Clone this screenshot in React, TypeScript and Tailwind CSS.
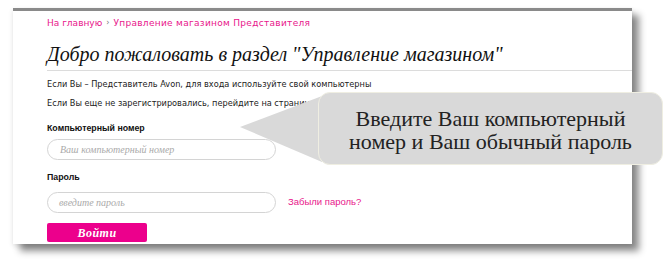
import React from "react";

const pink = "text-[#e8168b]";

function Callout() {
  return (
    <div className="absolute left-[238px] top-[92px] w-[428px] h-[75px]">
      <svg className="absolute left-0 top-0" width="100" height="75" viewBox="0 0 100 75">
        <polygon points="2,35 92,1 84,70" fill="#d9d9d9" />
      </svg>
      <div className="absolute left-[80px] top-0 w-[345px] h-[73px] rounded-[12px] bg-[#d9d9d9] border border-[#efeee2] flex flex-col items-center justify-center pt-[2px] text-[22px] leading-[23px] text-[#222] font-['Liberation_Serif',serif]">
        <span>Введите Ваш компьютерный</span>
        <span>номер и Ваш обычный пароль</span>
      </div>
    </div>
  );
}

function App() {
  return (
    <div className="relative w-[666px] h-[265px] bg-white overflow-hidden font-['Liberation_Sans',Arial,sans-serif]">
      <div className="ml-[13px] mt-[8px] w-[619px] h-[236px] bg-white border-t-[3px] border-[#8a8a8a] shadow-[7px_7px_7px_rgba(0,0,0,0.45),0_2px_5px_rgba(0,0,0,0.12)] pl-[34px]">
        <div className="flex items-center gap-[4px] pt-[5px] text-[9px] leading-[14px] font-['DejaVu_Sans',sans-serif]">
          <span className={pink}>На главную</span>
          <span className="text-[#777] text-[8px]">›</span>
          <span className={`${pink} tracking-[0.3px]`}>Управление магазином Представителя</span>
        </div>
        <h1 className="mt-[12px] text-[20px] leading-[24px] italic text-[#111] font-['Liberation_Serif',serif]">
          Добро пожаловать в раздел "Управление магазином"
        </h1>
        <div className="mt-[4px] h-px bg-[#dcdcdc]" />
        <p className="mt-[7px] text-[8.2px] leading-[12px] text-[#222] font-['DejaVu_Sans',sans-serif]">
          Если Вы – Представитель Avon, для входа используйте свой компьютерны
        </p>
        <p className="mt-[7px] text-[8.2px] leading-[12px] text-[#222] font-['DejaVu_Sans',sans-serif]">
          Если Вы еще не зарегистрировались, перейдите на страницу
        </p>
        <p className="mt-[13px] text-[8.8px] leading-[12px] font-bold text-[#111]">Компьютерный номер</p>
        <div className="mt-[5px] w-[229px] h-[21px] rounded-full border border-[#d4d4d4] pl-[12px] flex items-center text-[10px] italic text-[#aaa] font-['Liberation_Serif',serif]">
          Ваш компьютерный номер
        </div>
        <p className="mt-[11px] text-[8.8px] leading-[12px] font-bold text-[#111]">Пароль</p>
        <div className="mt-[9px] flex items-center gap-[12px]">
          <div className="w-[229px] h-[21px] rounded-full border border-[#d4d4d4] pl-[11px] flex items-center text-[10px] italic text-[#aaa] font-['Liberation_Serif',serif]">
            введите пароль
          </div>
          <span className={`${pink} text-[9.5px]`}>Забыли пароль?</span>
        </div>
        <button className="mt-[10px] w-[100px] h-[19px] rounded-[2px] bg-[#ec008c] text-white text-[12px] tracking-[0.5px] font-bold italic font-['Liberation_Serif',serif] flex items-center justify-center">
          Войти
        </button>
      </div>
      <Callout />
    </div>
  );
}

export default App;
